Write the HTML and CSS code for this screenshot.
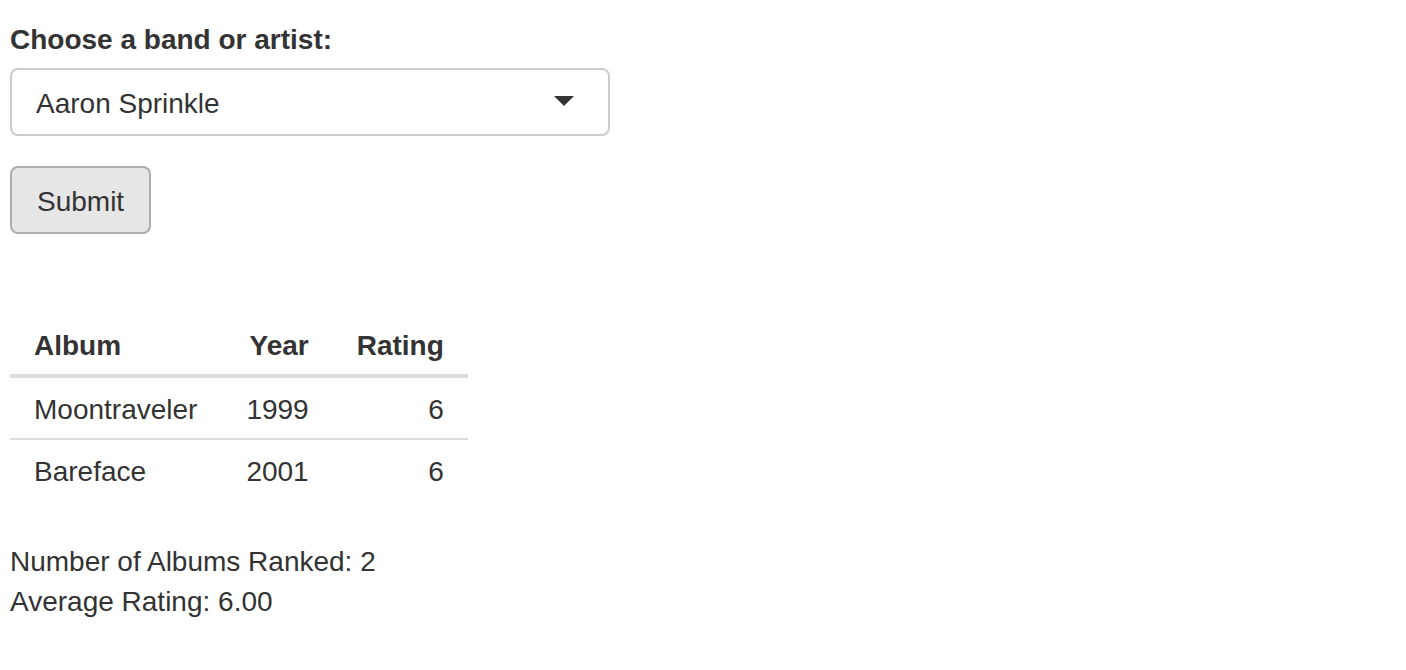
FILE: index.html
```html
<!DOCTYPE html>
<html lang="en">
<head>
<meta charset="utf-8">
<meta name="viewport" content="width=device-width, initial-scale=1">
<title>Album ratings</title>
<link rel="stylesheet" href="styles.css">
</head>
<body>
<main class="page">
  <form class="picker">
    <label class="picker-label" for="artist">Choose a band or artist:</label>
    <div class="select-wrap">
      <select class="select" id="artist" name="artist">
        <option selected>Aaron Sprinkle</option>
      </select>
      <svg class="caret" viewBox="0 0 20 10" aria-hidden="true"><path d="M0 0H20L10 10Z"/></svg>
    </div>
    <button class="button" type="button">Submit</button>
  </form>
  <table class="albums">
    <thead>
      <tr><th class="name">Album</th><th>Year</th><th>Rating</th></tr>
    </thead>
    <tbody>
      <tr><td class="name">Moontraveler</td><td>1999</td><td>6</td></tr>
      <tr><td class="name">Bareface</td><td>2001</td><td>6</td></tr>
    </tbody>
  </table>
  <section class="summary">
    <div>Number of Albums Ranked: 2</div>
    <div>Average Rating: 6.00</div>
  </section>
</main>
</body>
</html>
```
FILE: styles.css
```css
* {
  box-sizing: border-box;
}

body {
  margin: 0;
  background: #fff;
  color: #333;
  font: 28px/40px "Helvetica Neue", Helvetica, "Liberation Sans", Arial, sans-serif;
}

.page {
  padding: 20px 10px;
}

.picker {
  display: flex;
  flex-direction: column;
  align-items: flex-start;
}

.picker-label {
  margin-bottom: 8px;
  font-weight: 700;
}

.select-wrap {
  display: grid;
  align-items: center;
  width: 100%;
  max-width: 600px;
  margin-bottom: 30px;
}

.select,
.caret {
  grid-area: 1 / 1;
}

.select {
  appearance: none;
  width: 100%;
  height: 68px;
  padding: 4px 64px 0 24px;
  border: 2px solid #ccc;
  border-radius: 8px;
  background: #fff;
  color: #333;
  font: inherit;
}

.caret {
  justify-self: end;
  width: 20px;
  height: 10px;
  margin: 0 36px 2px 0;
  fill: #333;
  pointer-events: none;
}

.button {
  height: 68px;
  padding: 4px 25px 0;
  border: 2px solid #adadad;
  border-radius: 8px;
  background: #e6e6e6;
  color: #333;
  font: inherit;
}

.albums {
  margin-top: 80px;
  border-collapse: separate;
  border-spacing: 0;
}

.albums th,
.albums td {
  padding: 12px 24px 8px;
  text-align: right;
}

.albums .name {
  padding-right: 25px;
  text-align: left;
}

.albums th {
  border-bottom: 4px solid #ddd;
}

.albums tbody tr + tr td {
  border-top: 2px solid #ddd;
}

.summary {
  margin-top: 42px;
}
```
